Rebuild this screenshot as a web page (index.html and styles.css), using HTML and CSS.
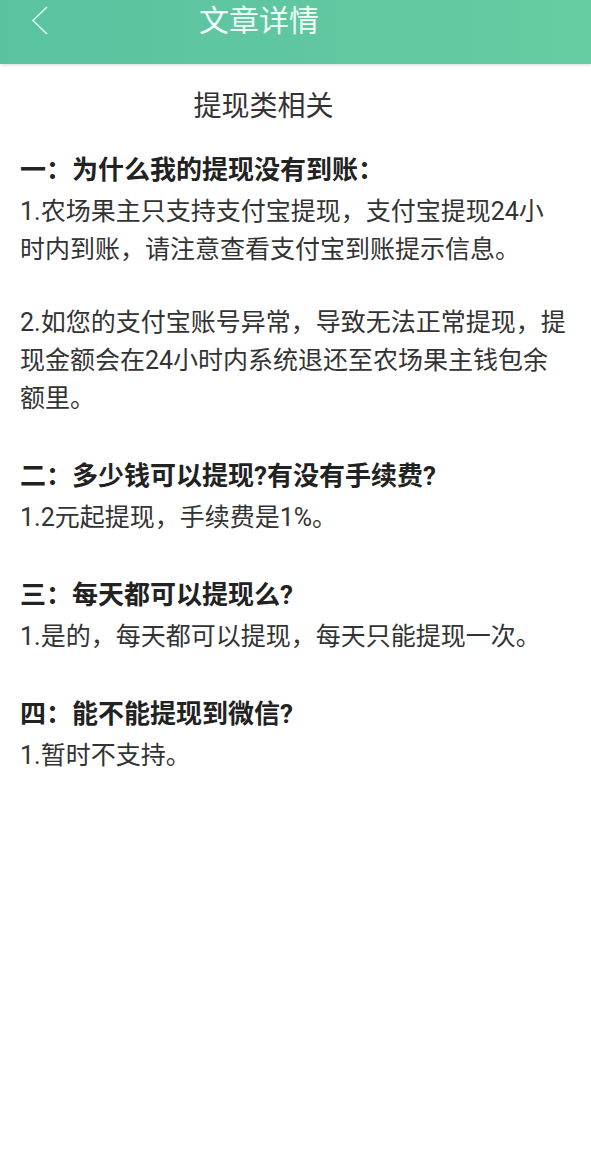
FILE: index.html
```html
<!DOCTYPE html>
<html lang="zh-CN">
<head>
    <meta charset="UTF-8">
    <meta name="viewport" content="width=device-width, initial-scale=1.0">
    <title>文章详情</title>
    <link rel="stylesheet" href="styles.css">
</head>
<body>
    <div class="header">
        <a class="back" href="#">
            <svg width="20" height="32" viewBox="0 0 20 32">
                <polyline points="16,2 2,15.5 16,29" fill="none" stroke="#d6fff2" stroke-width="1.6"/>
            </svg>
        </a>
        <div class="header-title">文章详情</div>
        <div class="header-right"></div>
    </div>

    <div class="article">
        <h1 class="article-title">提现类相关</h1>

        <div class="section">
            <h3>一：为什么我的提现没有到账：</h3>
            <p>1.农场果主只支持支付宝提现，支付宝提现24小时内到账，请注意查看支付宝到账提示信息。</p>
            <p>2.如您的支付宝账号异常，导致无法正常提现，提现金额会在24小时内系统退还至农场果主钱包余额里。</p>
        </div>

        <div class="section">
            <h3>二：多少钱可以提现?有没有手续费?</h3>
            <p>1.2元起提现，手续费是1%。</p>
        </div>

        <div class="section">
            <h3>三：每天都可以提现么?</h3>
            <p>1.是的，每天都可以提现，每天只能提现一次。</p>
        </div>

        <div class="section">
            <h3>四：能不能提现到微信?</h3>
            <p>1.暂时不支持。</p>
        </div>
    </div>
</body>
</html>
```

FILE: styles.css
```css
* {
    margin: 0;
    padding: 0;
    box-sizing: border-box;
    font-family: Roboto, "Noto Sans CJK SC", sans-serif;
}

body {
    background: #fff;
    color: #333;
}

.header {
    height: 64px;
    background: linear-gradient(90deg, #59c29f 0%, #66cca1 100%);
    box-shadow: 0 1px 3px rgba(0, 0, 0, 0.15);
    display: grid;
    grid-template-columns: 64px 1fr 137px;
    align-items: center;
}

.back {
    display: flex;
    align-items: center;
    padding-left: 31px;
    height: 64px;
    margin-top: -22px;
}

.header-title {
    text-align: center;
    color: #f2fff9;
    font-size: 30px;
    line-height: 40px;
    margin-top: -22px;
}

.article {
    padding: 23px 24px 0 20px;
}

.article-title {
    text-align: center;
    font-size: 28px;
    font-weight: 400;
    line-height: 40px;
    color: #333;
    margin-bottom: 23px;
    padding-right: 60px;
}

.section {
    margin-bottom: 38px;
}

.section h3 {
    font-size: 26px;
    font-weight: 700;
    line-height: 40px;
    color: #222;
    margin-bottom: 3px;
}

.section p {
    font-size: 25px;
    line-height: 38px;
    color: #333;
}

.section p + p {
    margin-top: 35px;
}
```
